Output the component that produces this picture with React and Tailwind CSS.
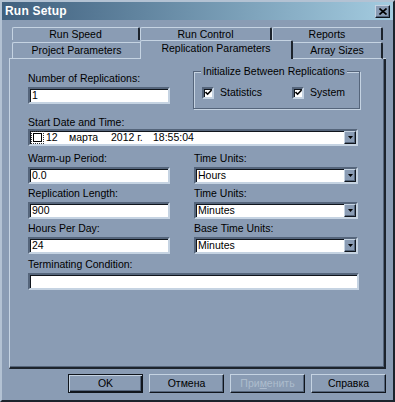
import React from 'react';

function Sunken({ className = '', children }) {
  return (
    <div
      className={
        'flex items-center bg-white border-2 border-t-[#55657b] border-l-[#55657b] border-b-[#c5d3e2] border-r-[#c5d3e2] shadow-[inset_1px_1px_0_#10151c] text-black ' +
        className
      }
    >
      {children}
    </div>
  );
}

function DropBtn() {
  return (
    <div className="ml-auto self-stretch w-[12px] flex items-center justify-center bg-[#8a9cb4] border-t border-l border-t-[#c5d3e2] border-l-[#c5d3e2] border-b border-r border-b-[#10151c] border-r-[#10151c] shadow-[inset_-1px_-1px_0_#55657b]">
      <svg width="5" height="3" viewBox="0 0 5 3">
        <path d="M0 0H5L2.5 3Z" fill="#000" />
      </svg>
    </div>
  );
}

function Check() {
  return (
    <span className="w-[12px] h-[12px] bg-white border-2 border-t-[#55657b] border-l-[#55657b] border-b-[#c5d3e2] border-r-[#c5d3e2] shadow-[inset_1px_1px_0_#10151c] flex items-center justify-center">
      <svg width="7" height="7" viewBox="0 0 7 7">
        <path d="M0.5 3 L2.6 5.2 L6.6 1" stroke="#000" strokeWidth="1.6" fill="none" />
      </svg>
    </span>
  );
}

function Field({ label, value, select, className = '' }) {
  return (
    <div className="flex flex-col">
      <span className="whitespace-nowrap">{label}</span>
      <Sunken className={'mt-[2px] h-[17px] ' + className}>
        <span className="pl-[2px]">{value}</span>
        {select && <DropBtn />}
      </Sunken>
    </div>
  );
}

function Btn({ children, def }) {
  if (def) {
    return (
      <div className="w-[75px] h-[19px] border border-[#10151c] bg-[#8a9cb4] shadow-[inset_1px_1px_0_#c5d3e2,inset_-1px_-1px_0_#10151c,inset_-2px_-2px_0_#55657b] flex items-center justify-center">
        {children}
      </div>
    );
  }
  return (
    <div className="w-[75px] h-[19px] bg-[#8a9cb4] border-t border-l border-t-[#c5d3e2] border-l-[#c5d3e2] border-b border-r border-b-[#10151c] border-r-[#10151c] shadow-[inset_-1px_-1px_0_#55657b] flex items-center justify-center">
      {children}
    </div>
  );
}

export default function App() {
  return (
    <div className="w-[395px] h-[402px] bg-[#8a9cb4] border-2 border-t-[#b3c2d3] border-l-[#b3c2d3] border-r-[#1c232c] border-b-[#1c232c] flex flex-col font-['Liberation_Sans',Arial,sans-serif] text-[10.5px] leading-[13px] text-black overflow-hidden">
      {/* Title bar */}
      <div className="h-[18px] shrink-0 flex items-center justify-between bg-linear-to-r from-[#40607e] to-[#a4cce0] pl-[3px] pr-[3px]">
        <span className="text-white font-bold text-[12px] leading-[14px] tracking-[0.2px]">Run Setup</span>
        <div className="w-[15px] h-[13px] bg-[#8a9cb4] border-t border-l border-t-[#c5d3e2] border-l-[#c5d3e2] border-b border-r border-b-[#10151c] border-r-[#10151c] shadow-[inset_-1px_-1px_0_#55657b] flex items-center justify-center">
          <svg width="8" height="7" viewBox="0 0 8 7">
            <path d="M0.5 0.5 L7.5 6.5 M7.5 0.5 L0.5 6.5" stroke="#000" strokeWidth="1.6" />
          </svg>
        </div>
      </div>

      <div className="px-[7px] flex flex-col">
        {/* Tab row 1 */}
        <div className="mt-[7px] h-[13px] flex pl-[3px]">
          <div className="w-[128px] h-[13px] border-t border-l border-r-2 border-t-[#c5d3e2] border-l-[#c5d3e2] border-r-[#1c232c] rounded-t-[2px] flex items-center justify-center">
            Run Speed
          </div>
          <div className="w-[132px] h-[13px] border-t border-l border-r-2 border-t-[#c5d3e2] border-l-[#c5d3e2] border-r-[#1c232c] rounded-t-[2px] flex items-center justify-center">
            Run Control
          </div>
          <div className="w-[111px] h-[13px] border-t border-l border-r-2 border-t-[#c5d3e2] border-l-[#c5d3e2] border-r-[#1c232c] rounded-t-[2px] flex items-center justify-center">
            Reports
          </div>
        </div>

        {/* Tab row 2 */}
        <div className="h-[19px] flex items-end">
          <div className="w-[3px] h-[17px] border-b border-b-[#c5d3e2]"></div>
          <div className="w-[128px] h-[17px] border-t border-l border-b border-t-[#c5d3e2] border-l-[#c5d3e2] border-b-[#c5d3e2] rounded-tl-[2px] flex items-center justify-center">
            Project Parameters
          </div>
          <div className="w-[153px] h-[19px] border-t border-l border-r-2 border-t-[#c5d3e2] border-l-[#c5d3e2] border-r-[#1c232c] rounded-t-[2px] flex items-center justify-center pb-[3px]">
            Replication Parameters
          </div>
          <div className="w-[90px] h-[17px] border-t border-r-2 border-b border-t-[#c5d3e2] border-r-[#1c232c] border-b-[#c5d3e2] rounded-tr-[2px] flex items-center justify-center">
            Array Sizes
          </div>
          <div className="flex-1 h-[17px] border-b border-b-[#c5d3e2]"></div>
        </div>

        {/* Panel */}
        <div className="h-[310px] border-l border-l-[#c5d3e2] border-r-2 border-r-[#1c232c] border-b-2 border-b-[#1c232c] shadow-[inset_-1px_-1px_0_#55657b] pl-[18px] pt-[13px] flex flex-col">
          <div className="flex items-start">
            <div className="w-[142px]">
              <Field label="Number of Replications:" value="1" className="w-[142px]" />
            </div>
            <fieldset className="ml-[23px] -mt-[7px] w-[167px] border border-[#55657b] shadow-[inset_1px_1px_0_#c5d3e2,1px_1px_0_#c5d3e2] pl-[7px] pt-[8px] pb-[9px]">
              <legend className="px-[2px] bg-[#8a9cb4] leading-[13px]">Initialize Between Replications</legend>
              <div className="flex items-center h-[13px] ml-[1px]">
                <Check />
                <span className="ml-[6px] w-[72px]">Statistics</span>
                <Check />
                <span className="ml-[6px]">System</span>
              </div>
            </fieldset>
          </div>

          <div className="mt-[7px] flex flex-col">
            <span>Start Date and Time:</span>
            <Sunken className="h-[17px] w-[330px]">
              <span className="ml-[1px] w-[13px] h-[13px] border border-dotted border-[#333] flex items-center justify-center">
                <span className="w-[9px] h-[9px] border border-black bg-white"></span>
              </span>
              <span className="ml-[2px] w-[23px]">12</span>
              <span className="w-[42px]">марта</span>
              <span className="w-[42px]">2012 г.</span>
              <span>18:55:04</span>
              <DropBtn />
            </Sunken>
          </div>

          <div className="mt-[6px] grid grid-cols-[142px_165px] gap-x-[24px] gap-y-[3px]">
            <Field label="Warm-up Period:" value="0.0" className="w-[142px]" />
            <Field label="Time Units:" value="Hours" select className="w-[164px]" />
            <Field label="Replication Length:" value="900" className="w-[142px]" />
            <Field label="Time Units:" value="Minutes" select className="w-[164px]" />
            <Field label="Hours Per Day:" value="24" className="w-[142px]" />
            <Field label="Base Time Units:" value="Minutes" select className="w-[164px]" />
          </div>

          <div className="mt-[4px]">
            <Field label="Terminating Condition:" value="" className="w-[331px]" />
          </div>
        </div>

        {/* Buttons */}
        <div className="mt-[5px] flex justify-end gap-[6px]">
          <Btn def>OK</Btn>
          <Btn>Отмена</Btn>
          <Btn>
            <span className="text-[#adbccd]">
              При<span className="underline">м</span>енить
            </span>
          </Btn>
          <Btn>Справка</Btn>
        </div>
      </div>
    </div>
  );
}
